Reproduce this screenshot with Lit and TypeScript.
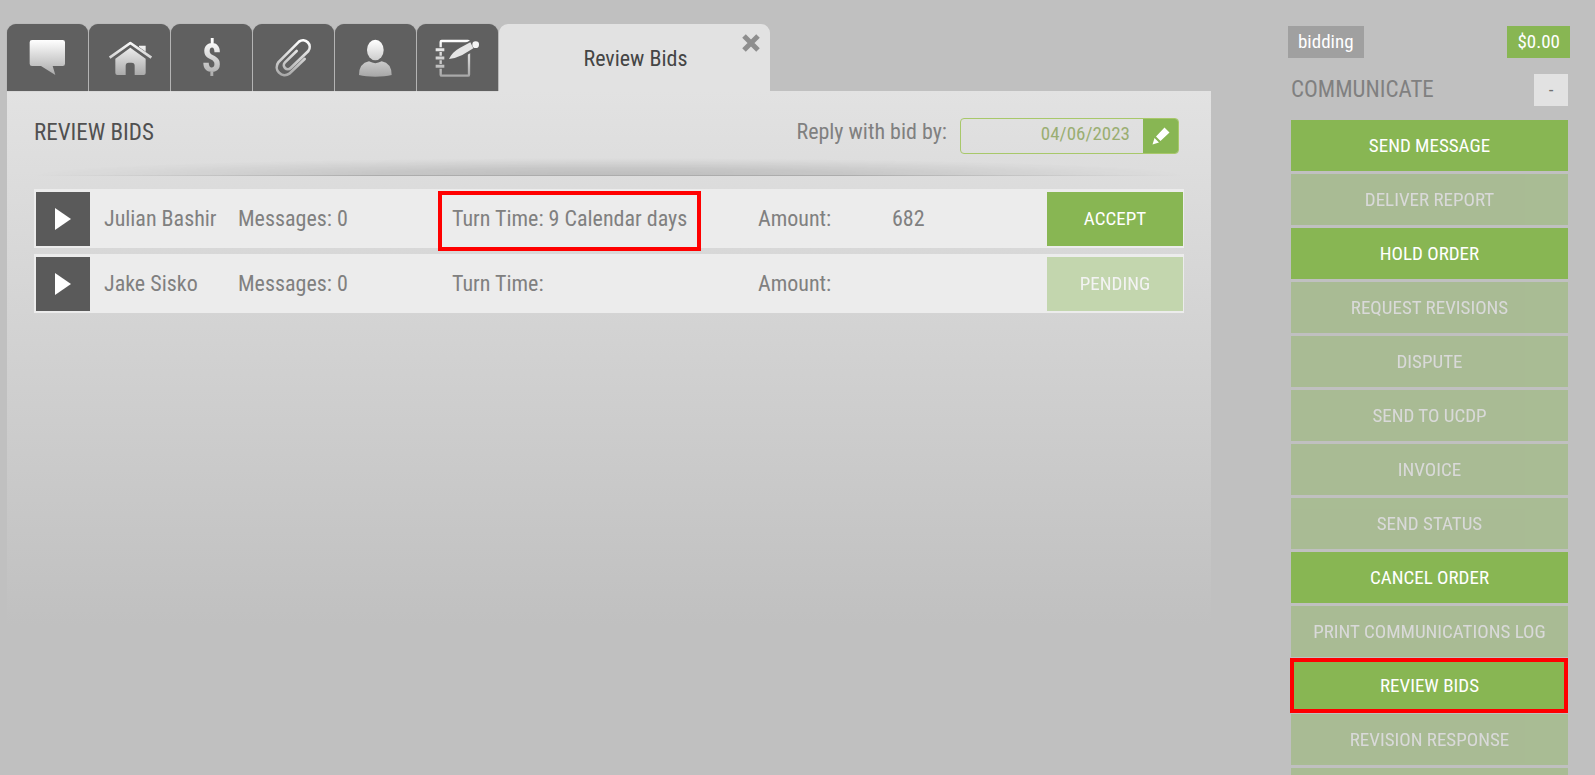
import { LitElement, html, css, svg, nothing } from "lit";
import { customElement, state } from "lit/decorators.js";
import { classMap } from "lit/directives/class-map.js";

const shade = (id: string) => svg`
  <defs>
    <linearGradient id=${id} gradientUnits="userSpaceOnUse" x1="0" y1="48" x2="0" y2="158">
      <stop offset="0" stop-color="#ffffff"></stop>
      <stop offset="1" stop-color="#a6a6a6"></stop>
    </linearGradient>
  </defs>`;

const icons: Record<string, unknown> = {
  messages: svg`${shade("g1")}
    <path fill="url(#g1)" d="M75 48H167Q174 48 174 55V119Q174 126 167 126H137L145 153L102 126H75Q68 126 68 119V55Q68 48 75 48Z"></path>`,
  property: svg`${shade("g2")}
    <path fill="url(#g2)" d="M150 65H170V88L150 73Z"></path>
    <path fill="none" stroke="#606060" stroke-width="14" d="M62 104L124 59L187 104"></path>
    <path fill="none" stroke="url(#g2)" stroke-width="8" stroke-linejoin="round" d="M62 101L124 57L187 101"></path>
    <path fill="url(#g2)" d="M79 104L124 71L170 104V147Q170 153 164 153H137V125Q137 116 128 116H119Q110 116 110 125V153H85Q79 153 79 147Z"></path>`,
  files: svg`${shade("g4")}
    <path fill="none" stroke="url(#g4)" stroke-width="8" stroke-linecap="round"
      d="M155 105L109 149A24 24 0 0 1 76 115L138 53A20 20 0 0 1 166 81L113 132A12 12 0 0 1 96 115L131 81"></path>`,
  contacts: svg`${shade("g5")}
    <ellipse fill="url(#g5)" cx="121" cy="78" rx="25" ry="31"></ellipse>
    <path fill="url(#g5)" d="M72 153Q72 118 102 112Q121 123 140 112Q170 118 170 153Q150 158 121 158Q92 158 72 153Z"></path>`,
  notes: svg`${shade("g6")}
    <rect fill="none" stroke="url(#g6)" stroke-width="7" x="71" y="51" width="85" height="104" rx="3"></rect>
    <path stroke="#606060" stroke-width="14" d="M64 77H78M64 102H78M64 127H78"></path>
    <path stroke="url(#g6)" stroke-width="9" d="M56 77.1L82 77M56 102.1L82 102M56 127.1L82 127"></path>
    <path fill="#606060" d="M92 108Q102 78 128 66L166 46L178 78L140 98Q118 110 92 108Z"></path>
    <path fill="#e6e6e6" d="M96 105Q106 84 128 72L160 55L169 73L136 93Q118 102 96 105Z"></path>
    <circle fill="#f4f4f4" cx="176" cy="62" r="10"></circle>`,
};

interface Bid {
  name: string;
  messages: number;
  turnTime: string;
  amount: string;
  accepted: boolean;
  marked: boolean;
}

interface Action {
  label: string;
  enabled: boolean;
  marked?: boolean;
}

@customElement("app-root")
export class AppRoot extends LitElement {
  @state() private replyBy = "04/06/2023";

  private tabs = [
    { id: "messages", label: "Messages" },
    { id: "property", label: "Property" },
    { id: "fees", label: "Fees" },
    { id: "files", label: "Files" },
    { id: "contacts", label: "Contacts" },
    { id: "notes", label: "Notes" },
  ];

  private bids: Bid[] = [
    { name: "Julian Bashir", messages: 0, turnTime: "9 Calendar days", amount: "682", accepted: true, marked: true },
    { name: "Jake Sisko", messages: 0, turnTime: "", amount: "", accepted: false, marked: false },
  ];

  private actions: Action[] = [
    { label: "SEND MESSAGE", enabled: true },
    { label: "DELIVER REPORT", enabled: false },
    { label: "HOLD ORDER", enabled: true },
    { label: "REQUEST REVISIONS", enabled: false },
    { label: "DISPUTE", enabled: false },
    { label: "SEND TO UCDP", enabled: false },
    { label: "INVOICE", enabled: false },
    { label: "SEND STATUS", enabled: false },
    { label: "CANCEL ORDER", enabled: true },
    { label: "PRINT COMMUNICATIONS LOG", enabled: false },
    { label: "REVIEW BIDS", enabled: true, marked: true },
    { label: "REVISION RESPONSE", enabled: false },
    { label: "", enabled: false },
  ];

  static styles = css`
    :host {
      display: flex;
      align-items: flex-start;
      gap: 77px;
      box-sizing: border-box;
      height: 100vh;
      overflow: hidden;
      padding: 24px 25px 0 7px;
      background: #c0c0c0;
      color: #808080;
      font: 400 22px/28px "Roboto Condensed", Roboto, sans-serif;
    }
    * { box-sizing: border-box; }
    button, input { font: inherit; border: 0; border-radius: 0; margin: 0; padding: 0; }
    h1, h2 { margin: 0; font-weight: 400; font-size: 23px; line-height: 28px; }

    .main { flex: 1; min-width: 0; }
    .tabs { display: flex; height: 67px; }
    .tab {
      width: 81px;
      margin-right: 1px;
      border-radius: 9px 9px 0 0;
      background: #606060;
      box-shadow: 0 0 1px #808080;
    }
    .tab svg { display: block; width: 81px; height: 67px; }
    .dollar {
      display: block;
      padding-top: 3px;
      font-size: 40px;
      line-height: 64px;
      font-weight: 700;
      color: transparent;
      background: linear-gradient(#ffffff 16px, #a6a6a6 54px);
      background-clip: text;
      -webkit-background-clip: text;
    }
    .tab-active {
      position: relative;
      display: flex;
      align-items: center;
      justify-content: center;
      width: 271px;
      padding: 2px 0 0 2px;
      border-radius: 9px 9px 0 0;
      background: #e2e2e2;
      color: #454545;
    }
    .close { position: absolute; top: 10px; right: 10px; width: 18px; height: 18px; background: none; }
    .close svg { display: block; }

    .panel {
      min-height: 534px;
      padding: 28px 27px 0;
      background: linear-gradient(#e2e2e2, #c0c0c0);
    }
    .head { display: flex; justify-content: space-between; align-items: flex-start; height: 58px; }
    .head h1 { color: #505050; }
    .reply { display: flex; gap: 13px; margin: -1px 5px 0 0; }
    .date {
      display: flex;
      width: 219px;
      height: 36px;
      border: 1px solid #a8c86a;
      border-radius: 4px;
      overflow: hidden;
    }
    .date input {
      flex: 1;
      min-width: 0;
      padding: 0 13px 4px 8px;
      background: transparent;
      color: #9aae72;
      font-size: 19px;
      text-align: right;
      outline: 0;
    }
    .edit { display: grid; place-items: center; width: 35px; background: #88b653; }
    .rule {
      height: 18px;
      margin-top: -19px;
      border-bottom: 1px solid;
      border-image: linear-gradient(90deg, transparent, #acacac 30%, #acacac 70%, transparent) 1;
      background: radial-gradient(50% 100% at 50% 100%, #00000024, #0000001a 40%, #0000000a 75%, transparent);
    }

    .bids { display: flex; flex-direction: column; gap: 6px; margin: 13px 0 0; padding: 0; list-style: none; }
    .bid {
      display: grid;
      grid-template-columns: 54px 120px 200px 292px 120px 1fr 136px;
      align-items: center;
      column-gap: 14px;
      height: 59px;
      padding: 2px 1px 2px 2px;
      background: #ececec;
    }
    .play { display: grid; place-items: center; width: 54px; height: 54px; background: #5a5a5a; }
    .turn { position: relative; }
    .mark { position: absolute; border: 4px solid #ff0000; pointer-events: none; }
    .turn .mark { inset: -14px 43px -18px -14px; }
    .green {
      height: 54px;
      background: #88b653;
      color: #ffffff;
      font-size: 19px;
      line-height: 24px;
    }
    .green:disabled { opacity: 0.4; }

    .side { width: 282px; flex: none; padding-top: 2px; }
    .badges { display: flex; justify-content: space-between; }
    .badge { height: 32px; padding: 0 10px; background: #a0a0a0; color: #ffffff; font-size: 19px; line-height: 32px; }
    .badge-total { background: #88b653; }
    .group { display: flex; justify-content: space-between; align-items: center; margin: 16px 2px 14px 3px; }
    .toggle { width: 34px; height: 32px; background: #e2e2e2; color: #707070; font-size: 19px; line-height: 28px; }
    .actions { display: flex; flex-direction: column; gap: 3px; margin: 0 2px 0 3px; }
    .slot { position: relative; display: grid; }
    .slot .green { height: 51px; }
    .slot .mark { inset: -2px 0 -2px -1px; }
  `;

  private renderBid(bid: Bid) {
    return html`
      <li class="bid">
        <button class="play" aria-label=${`Open bid from ${bid.name}`}>
          <svg width="16" height="22" viewBox="0 0 16 22"><path fill="#fff" d="M0 0L16 11L0 22Z"></path></svg>
        </button>
        <span>${bid.name}</span>
        <span>Messages: ${bid.messages}</span>
        <span class="turn">Turn Time: ${bid.turnTime}${bid.marked ? html`<span class="mark"></span>` : nothing}</span>
        <span>Amount:</span>
        <span>${bid.amount}</span>
        <button class="green" ?disabled=${!bid.accepted}>${bid.accepted ? "ACCEPT" : "PENDING"}</button>
      </li>`;
  }

  render() {
    return html`
      <main class="main">
        <nav class="tabs">
          ${this.tabs.map(
            (tab) => html`<button class="tab" aria-label=${tab.label}>
              ${tab.id === "fees"
                ? html`<span class="dollar">$</span>`
                : html`<svg viewBox="0 0 243 201">${icons[tab.id]}</svg>`}
            </button>`
          )}
          <div class="tab-active">
            Review Bids
            <button class="close" aria-label="Close tab">
              <svg width="18" height="18" viewBox="0 0 18 18"><path stroke="#8e8e8e" stroke-width="5" d="M2 2L16 16M16 2L2 16"></path></svg>
            </button>
          </div>
        </nav>
        <section class="panel">
          <header class="head">
            <h1>REVIEW BIDS</h1>
            <div class="reply">
              <label for="reply-by">Reply with bid by:</label>
              <div class="date">
                <input id="reply-by" type="text" .value=${this.replyBy}
                  @input=${(e: Event) => (this.replyBy = (e.target as HTMLInputElement).value)} />
                <button class="edit" aria-label="Edit date">
                  <svg width="18" height="18" viewBox="0 0 18 18">
                    <path fill="#fff" d="M12.5 0.5L17.5 5.5L8.5 14L4 9.5ZM2.5 11L7 15.5L0.5 17.5Z"></path>
                  </svg>
                </button>
              </div>
            </div>
          </header>
          <div class="rule" role="presentation"></div>
          <ul class="bids">${this.bids.map((bid) => this.renderBid(bid))}</ul>
        </section>
      </main>
      <aside class="side">
        <div class="badges">
          <span class="badge">bidding</span>
          <span class="badge badge-total">$0.00</span>
        </div>
        <div class="group">
          <h2>COMMUNICATE</h2>
          <button class="toggle" aria-label="Collapse">-</button>
        </div>
        <div class="actions">
          ${this.actions.map(
            (action) => html`<div class=${classMap({ slot: true, marked: !!action.marked })}>
              <button class="green" ?disabled=${!action.enabled} aria-label=${action.label || "More actions"}>${action.label}</button>
              ${action.marked ? html`<span class="mark"></span>` : nothing}
            </div>`
          )}
        </div>
      </aside>`;
  }
}
